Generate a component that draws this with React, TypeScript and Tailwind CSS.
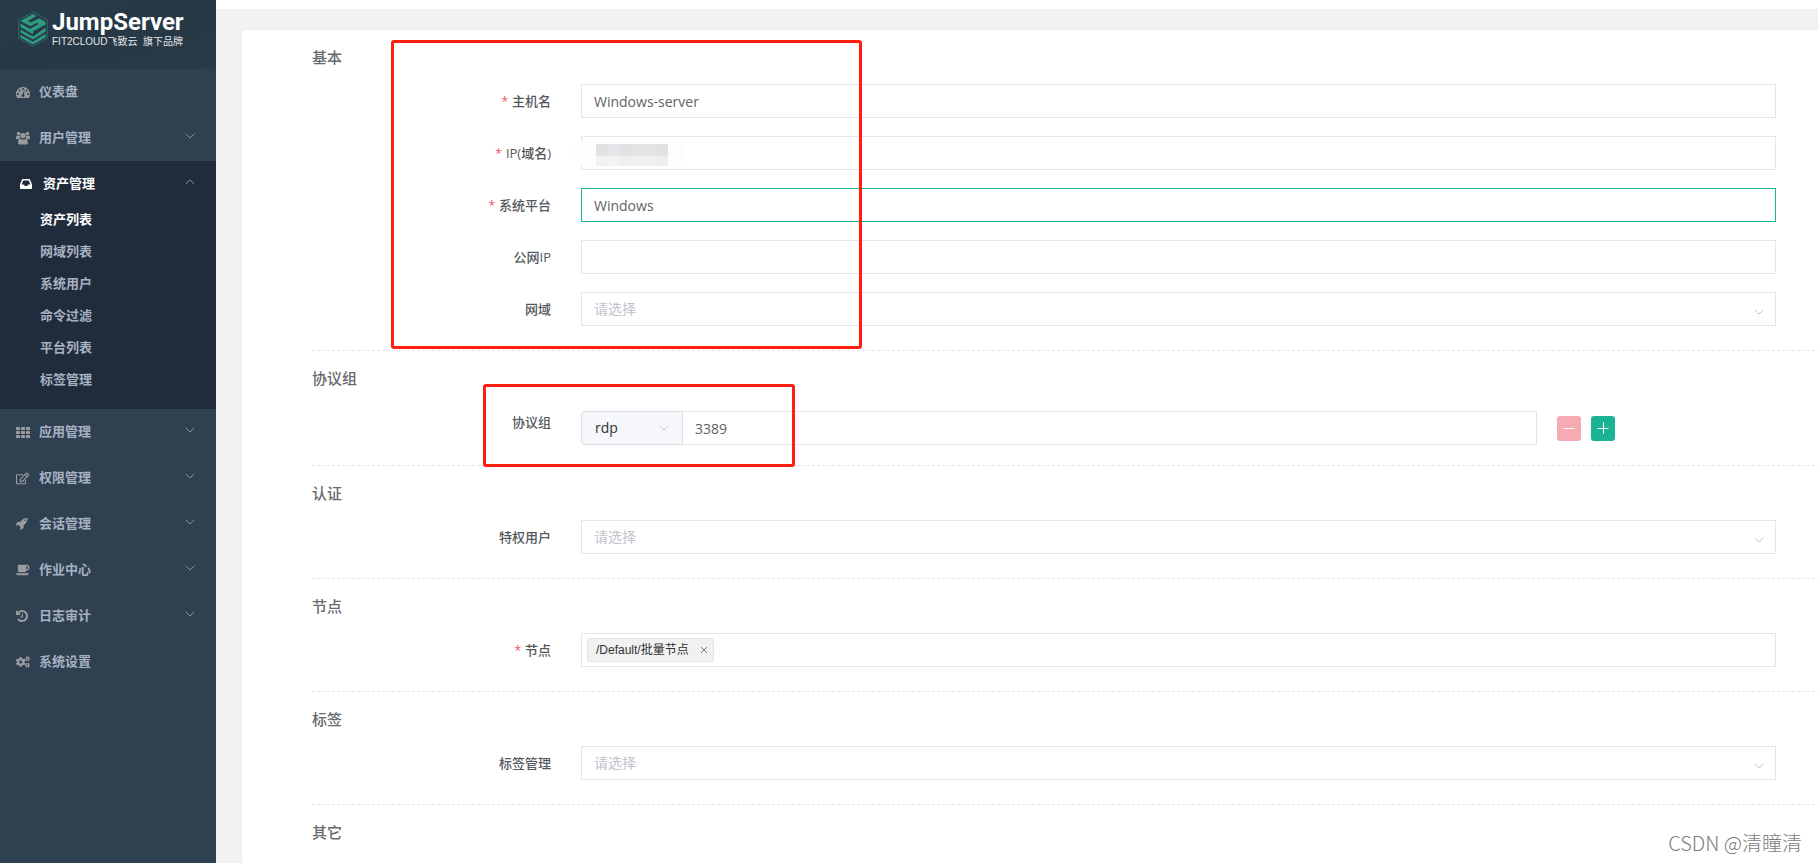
import { type ReactNode } from "react";
import { FaRegEdit, FaCogs } from "react-icons/fa";

function Glyph({ box, size, d }: { box: string; size: string; d: string }) {
  return (
    <svg viewBox={box} className={size} fill="currentColor" aria-hidden="true">
      <path d={d} />
    </svg>
  );
}

const dashboardPath =
  "M384 1152q0-53-37.5-90.5t-90.5-37.5-90.5 37.5-37.5 90.5 37.5 90.5 90.5 37.5 90.5-37.5 37.5-90.5zm192-448q0-53-37.5-90.5t-90.5-37.5-90.5 37.5-37.5 90.5 37.5 90.5 90.5 37.5 90.5-37.5 37.5-90.5zm428 481l101-382q6-26-7.5-48.5t-38.5-29.5-48 6.5-30 39.5l-101 382q-60 5-107 43.5t-63 98.5q-20 77 20 146t117 89 146-20 89-117q16-60-6-117t-72-91zm660-33q0-53-37.5-90.5t-90.5-37.5-90.5 37.5-37.5 90.5 37.5 90.5 90.5 37.5 90.5-37.5 37.5-90.5zm-640-640q0-53-37.5-90.5t-90.5-37.5-90.5 37.5-37.5 90.5 37.5 90.5 90.5 37.5 90.5-37.5 37.5-90.5zm448 192q0-53-37.5-90.5t-90.5-37.5-90.5 37.5-37.5 90.5 37.5 90.5 90.5 37.5 90.5-37.5 37.5-90.5zm320 448q0 261-141 483-19 29-54 29h-1402q-35 0-54-29-141-221-141-483 0-182 71-348t191-286 286-191 348-71 348 71 286 191 191 286 71 348z";
const historyPath =
  "M1664 896q0 156-61 298t-164 245-245 164-298 61q-172 0-327-72.5t-264-204.5q-7-10-6.5-22.5t8.5-20.5l137-138q10-9 25-9 16 2 23 12 73 95 179 147t225 52q104 0 198.5-40.5t163.5-109.5 109.5-163.5 40.5-198.5-40.5-198.5-109.5-163.5-163.5-109.5-198.5-40.5q-98 0-188 35.5t-160 101.5l137 138q31 30 14 69-17 40-59 40h-448q-26 0-45-19t-19-45v-448q0-42 40-59 39-17 69 14l130 129q107-101 244.5-156.5t284.5-55.5q156 0 298 61t245 164 164 245 61 298zm-640-288v448q0 14-9 23t-23 9h-320q-14 0-23-9t-9-23v-64q0-14 9-23t23-9h224v-352q0-14 9-23t23-9h64q14 0 23 9t9 23z";
const rocketPath =
  "M1440 448q0-40-28-68t-68-28-68 28-28 68 28 68 68 28 68-28 28-68zm224-288q0 249-75.5 430.5t-253.5 360.5q-81 80-195 176l-20 379q-2 16-16 26l-384 224q-7 4-16 4-12 0-23-9l-64-64q-13-14-8-32l85-276-281-281-276 85q-3 1-9 1-14 0-23-9l-64-64q-17-19-5-39l224-384q10-14 26-16l379-20q96-114 176-195 188-187 358-258t431-71q14 0 24 9.5t10 22.5z";
const coffeePath =
  "M1664 640q0-80-56-136t-136-56h-64v384h64q80 0 136-56t56-136zm-1664 768h1792q0 106-75 181t-181 75h-1280q-106 0-181-75t-75-181zm1856-768q0 159-112.5 271.5t-271.5 112.5h-64v32q0 92-66 158t-158 66h-704q-92 0-158-66t-66-158v-736q0-26 19-45t45-19h1152q159 0 271.5 112.5t112.5 271.5z";
const inboxPath =
  "M1151 960h316q-1-3-2.5-8t-2.5-8l-212-496h-708l-212 496q-1 2-2.5 8t-2.5 8h316l95 192h320zm513 30v482q0 26-19 45t-45 19h-1408q-26 0-45-19t-19-45v-482q0-62 25-123l238-552q10-25 36.5-42t52.5-17h832q26 0 52.5 17t36.5 42l238 552q25 61 25 123z";

function GroupIcon() {
  return (
    <svg viewBox="0 0 14 14" className="size-3.5" fill="currentColor" aria-hidden="true">
      <circle cx="2.6" cy="2.6" r="1.8" />
      <circle cx="11.4" cy="2.6" r="1.8" />
      <circle cx="7" cy="4.6" r="2.7" />
      <path d="M0 7.2 C0 5.6 0.5 4.6 1.2 4.6 C2 5.1 3 5.1 3.8 4.8 C3.8 6 4.1 6.8 4.6 7.3 C3.8 7.4 3.1 7.7 2.6 8.3 H1.2 C0.4 8.3 0 7.9 0 7.2 Z" />
      <path d="M14 7.2 C14 5.6 13.5 4.6 12.8 4.6 C12 5.1 11 5.1 10.2 4.8 C10.2 6 9.9 6.8 9.4 7.3 C10.2 7.4 10.9 7.7 11.4 8.3 H12.8 C13.6 8.3 14 7.9 14 7.2 Z" />
      <path d="M2.1 11.8 C2.1 9.3 3 7.7 4.4 7.7 C6 8.9 8 8.9 9.6 7.7 C11 7.7 11.9 9.3 11.9 11.8 C11.9 13 11.1 13.6 10.1 13.6 H3.9 C2.9 13.6 2.1 13 2.1 11.8 Z" />
    </svg>
  );
}

function GridIcon() {
  return (
    <svg viewBox="0 0 14 14" className="size-3.5" fill="currentColor" aria-hidden="true">
      {[2, 6, 10].map((y) => [0, 5, 10].map((x) => <rect key={`${x}-${y}`} x={x} y={y} width="4" height="3" rx="0.5" />))}
    </svg>
  );
}

function Chevron({ up = false }: { up?: boolean }) {
  return (
    <svg viewBox="0 0 10 6" className="h-1.5 w-2.5" fill="none" stroke="currentColor" strokeWidth="1" aria-hidden="true">
      <path d={up ? "M0.7 5 L5 0.8 L9.3 5" : "M0.7 0.8 L5 5 L9.3 0.8"} />
    </svg>
  );
}

function Logo() {
  return (
    <svg viewBox="0 0 30 36" className="h-9 w-[30px]" fill="none" aria-hidden="true">
      <path d="M15 1 L29.3 9 V27 L15 35 L0.7 27 V9 Z" stroke="#2a6f67" strokeWidth="1" />
      <g fill="#2f9b7f">
        <path d="M15 3 L18.6 5 L10 9.8 L13 11.5 L20.8 7.2 L27.6 11 V13.6 L15 20.6 L11 18.4 L20.8 12.9 L18.8 11.8 L12.6 15.2 L2.4 9.9 Z" />
        <path d="M2.4 12.4 L15 19.6 V23.2 L2.4 16 Z" />
        <path d="M2.4 18.4 L15 25.4 L27.6 16.4 V20.4 L15 28.6 L2.4 21.6 Z" />
        <path d="M2.4 23.8 L15 30.8 L27.6 22.8 V26.2 L15 33.6 L2.4 26.6 Z" />
      </g>
    </svg>
  );
}

type Item = { label: string; icon: ReactNode; arrow?: boolean };

function MenuItem({ label, icon, arrow }: Item) {
  return (
    <li>
      <a href="#" className="flex h-[46px] items-center pr-[21px] pl-4">
        <span className="flex w-[23px] items-center text-[#999b9f]">{icon}</span>
        <span className="flex-1">{label}</span>
        {arrow && (
          <span className="pb-1 text-[#8d949d]">
            <Chevron />
          </span>
        )}
      </a>
    </li>
  );
}

const upper: Item[] = [
  { label: "仪表盘", icon: <Glyph box="0 0 1792 1792" size="size-3.5" d={dashboardPath} /> },
  { label: "用户管理", icon: <GroupIcon />, arrow: true },
];
const lower: Item[] = [
  { label: "应用管理", icon: <GridIcon />, arrow: true },
  { label: "权限管理", icon: <FaRegEdit className="size-[13px]" />, arrow: true },
  { label: "会话管理", icon: <Glyph box="64 128 1664 1664" size="size-3" d={rocketPath} />, arrow: true },
  { label: "作业中心", icon: <Glyph box="0 64 1920 1792" size="size-3.5" d={coffeePath} />, arrow: true },
  { label: "日志审计", icon: <Glyph box="128 128 1536 1536" size="size-3" d={historyPath} />, arrow: true },
  { label: "系统设置", icon: <FaCogs className="size-3.5" /> },
];
const assetPages = ["资产列表", "网域列表", "系统用户", "命令过滤", "平台列表", "标签管理"];

function Sidebar() {
  return (
    <aside className="w-[216px] shrink-0 bg-[#2f4050] text-[13px] font-bold text-[#a7b1c2]">
      <a
        href="#"
        className="flex h-[69px] items-start gap-1 bg-linear-to-br from-[#293c4a] via-[#263845] to-[#283b49] pt-[11px] pl-[18px] text-white"
      >
        <Logo />
        <span className="flex flex-col">
          <span className="font-[Roboto,sans-serif] text-[24px] leading-[23px]">JumpServer</span>
          <span className="font-['Liberation_Sans','Noto_Sans_CJK_SC',sans-serif] text-[10px] leading-4 font-normal whitespace-pre text-[#e3e7ea]">
            FIT2CLOUD飞致云  旗下品牌
          </span>
        </span>
      </a>
      <nav>
        <ul>
          {upper.map((i) => (
            <MenuItem key={i.label} {...i} />
          ))}
          <li className="bg-[#202c3b] pt-[3px] pb-[13px]">
            <a href="#" className="flex h-10 items-center pr-[21px] pl-5 text-white">
              <span className="flex w-[23px] items-center">
                <Glyph box="128 128 1536 1536" size="size-3" d={inboxPath} />
              </span>
              <span className="flex-1">资产管理</span>
              <span className="pb-1 text-[#8d949d]">
                <Chevron up />
              </span>
            </a>
            <ul>
              {assetPages.map((p, i) => (
                <li key={p}>
                  <a href="#" className={i === 0 ? "flex h-8 items-center pl-10 text-white" : "flex h-8 items-center pl-10"}>
                    {p}
                  </a>
                </li>
              ))}
            </ul>
          </li>
          {lower.map((i) => (
            <MenuItem key={i.label} {...i} />
          ))}
        </ul>
      </nav>
    </aside>
  );
}

function Section({ title, first = false, children }: { title: string; first?: boolean; children?: ReactNode }) {
  return (
    <section>
      {!first && <div className="h-px bg-[repeating-linear-gradient(90deg,#e4e6e9_0_3px,transparent_3px_5px)]" />}
      <h3 className="mb-[15px] pt-[15px] text-[15px] leading-6 font-medium text-[#676a6c]">{title}</h3>
      {children && <div className="flex flex-col gap-[18px] pr-[42px]">{children}</div>}
    </section>
  );
}

function Row({ id, label, required = false, children }: { id: string; label: string; required?: boolean; children: ReactNode }) {
  return (
    <div className="flex gap-[30px]">
      <label htmlFor={id} className="w-[239px] shrink-0 text-right text-[13px] leading-[34px] font-medium text-[#55585c]">
        {required && <span className="mr-1 text-xs font-normal text-[#ed5565]">*</span>}
        {label}
      </label>
      <div className="min-w-0 flex-1">{children}</div>
    </div>
  );
}

function TextField({ id, value = "", active = false }: { id: string; value?: string; active?: boolean }) {
  return (
    <input
      id={id}
      type="text"
      defaultValue={value}
      className={
        active
          ? "block h-[34px] w-full border border-[#1ab394] bg-white px-3 text-sm text-[#606266] outline-none"
          : "block h-[34px] w-full border border-[#e5e6e7] bg-white px-3 text-sm text-[#606266] outline-none"
      }
    />
  );
}

function SelectField({ id }: { id: string }) {
  return (
    <div className="relative">
      <select id={id} className="block h-[34px] w-full appearance-none border border-[#e5e6e7] bg-white px-3 text-sm text-[#c0c4cc] outline-none">
        <option>请选择</option>
      </select>
      <span className="pointer-events-none absolute top-[17px] right-3 text-[#c0c4cc]">
        <Chevron />
      </span>
    </div>
  );
}

const maskCells = [
  "bg-[#e2e2e1]", "bg-[#e5e6e9]", "bg-[#e1e2e3]", "bg-[#e3e5e4]", "bg-[#e5e3e3]", "bg-[#e1e2e2]",
  "bg-[#f2f2f2]", "bg-[#f3f3f4]", "bg-[#efefef]", "bg-[#eff1f0]", "bg-[#f0f0f0]", "bg-[#eeeeef]",
];

export default function App() {
  return (
    <div className="relative flex h-screen overflow-hidden bg-[#f2f2f2] font-['Open_Sans','Noto_Sans_CJK_SC',sans-serif]">
      <Sidebar />
      <main className="min-w-0 flex-1">
        <div className="h-[9px] bg-white" />
        <div className="mt-5 ml-[25px] min-h-screen rounded-tl-sm border-t border-l border-[#ebedef] bg-white pl-[70px]">
          <form className="flex flex-col">
            <Section title="基本" first>
              <Row id="host" label="主机名" required>
                <TextField id="host" value="Windows-server" />
              </Row>
              <Row id="ip" label="IP(域名)" required>
                <div className="relative">
                  <TextField id="ip" />
                  <div className="absolute top-1 -left-2 h-[26px] w-[112px] rounded-full bg-[#fdfdfd] pt-1 pl-[23px]">
                    <div className="grid w-[72px] grid-cols-6 grid-rows-[12px_10px]">
                      {maskCells.map((c, i) => (
                        <span key={i} className={c} />
                      ))}
                    </div>
                  </div>
                </div>
              </Row>
              <Row id="platform" label="系统平台" required>
                <TextField id="platform" value="Windows" active />
              </Row>
              <Row id="public-ip" label="公网IP">
                <TextField id="public-ip" />
              </Row>
              <Row id="domain" label="网域">
                <SelectField id="domain" />
              </Row>
            </Section>
            <div className="h-6" />
            <Section title="协议组">
              <Row id="port" label="协议组">
                <div className="flex pt-1.5">
                  <div className="flex w-4/5">
                    <div className="relative w-[102px] shrink-0">
                      <select
                        aria-label="协议"
                        className="block h-[34px] w-full appearance-none rounded-l border border-[#dcdfe6] bg-[#f5f7fa] px-[13px] text-sm text-[#303133] outline-none"
                      >
                        <option>rdp</option>
                      </select>
                      <span className="pointer-events-none absolute top-3.5 right-3.5 flex text-[#c0c4cc]">
                        <Chevron />
                      </span>
                    </div>
                    <input
                      id="port"
                      type="text"
                      defaultValue="3389"
                      className="h-[34px] min-w-0 flex-1 border border-l-0 border-[#e5e6e7] px-3 text-sm text-[#606266] outline-none"
                    />
                  </div>
                  <div className="flex w-1/5 items-center gap-2.5 pl-5">
                    <button type="button" aria-label="删除" className="flex h-[25px] w-6 items-center justify-center rounded-[3px] bg-[#f6aab2] text-white">
                      <svg viewBox="0 0 12 12" className="size-3" stroke="currentColor" aria-hidden="true">
                        <path d="M0.5 6.5 H11.5" />
                      </svg>
                    </button>
                    <button type="button" aria-label="添加" className="flex h-[25px] w-6 items-center justify-center rounded-[3px] bg-[#1ab394] text-white">
                      <svg viewBox="0 0 12 12" className="size-3" stroke="currentColor" aria-hidden="true">
                        <path d="M0.5 6.5 H11.5 M6.5 0.5 V11.5" />
                      </svg>
                    </button>
                  </div>
                </div>
              </Row>
            </Section>
            <div className="h-5" />
            <Section title="认证">
              <Row id="admin-user" label="特权用户">
                <SelectField id="admin-user" />
              </Row>
            </Section>
            <div className="h-6" />
            <Section title="节点">
              <Row id="nodes" label="节点" required>
                <div className="flex h-[34px] items-center border border-[#e5e6e7] px-[5px]">
                  <span className="flex h-6 items-center gap-2 rounded-[3px] border border-[#e5e5e6] bg-[#f1f1f1] pr-0.5 pl-2 font-['Liberation_Sans','Noto_Sans_CJK_SC',sans-serif] text-xs text-[#303133]">
                    /Default/批量节点
                    <button type="button" aria-label="移除节点" className="flex size-3.5 items-center justify-center text-[#77797d]">
                      <svg viewBox="0 0 8 8" className="size-2" stroke="currentColor" aria-hidden="true">
                        <path d="M1 1 L7 7 M7 1 L1 7" />
                      </svg>
                    </button>
                  </span>
                  <input id="nodes" type="text" className="min-w-0 flex-1 px-2 text-sm outline-none" />
                </div>
              </Row>
            </Section>
            <div className="h-6" />
            <Section title="标签">
              <Row id="labels" label="标签管理">
                <SelectField id="labels" />
              </Row>
            </Section>
            <div className="h-6" />
            <Section title="其它" />
          </form>
        </div>
      </main>
      <div className="pointer-events-none absolute top-10 left-[391px] h-[309px] w-[471px] rounded-[3px] border-3 border-[#ff1e10]" />
      <div className="pointer-events-none absolute top-96 left-[483px] h-[83px] w-[312px] rounded-[3px] border-3 border-[#ff1e10]" />
      <p className="pointer-events-none absolute right-4 bottom-1.5 font-['Noto_Sans_CJK_SC',sans-serif] text-[20px] leading-7 font-light text-[#7d7d7d]">
        CSDN @清瞳清
      </p>
    </div>
  );
}
